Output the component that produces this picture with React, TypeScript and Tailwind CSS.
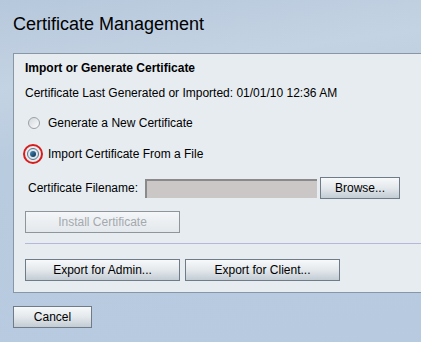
export default function App() {
  const btn =
    "h-[22px] border border-[#6f7b86] bg-gradient-to-b from-[#f7f9fa] via-[#e3e8ec] to-[#c3ccd4] text-[12px] text-black leading-none";

  return (
    <div
      className="relative h-[342px] w-[421px] overflow-hidden bg-[#b8cadf] text-black"
      style={{ fontFamily: '"Liberation Sans", Arial, sans-serif' }}
    >
      {/* lighter sweep in the top right */}
      <div className="pointer-events-none absolute inset-0 bg-[linear-gradient(172deg,#b6c8dc_0%,#c4d3e3_22%,#b9cbdf_40%,#b8cadf_100%)]" />

      <div className="relative pl-[13px]">
        <h1 className="pt-[13px] text-[18px] leading-[22px] font-normal">Certificate Management</h1>

        <div className="mt-[18px] h-[240px] border-y border-l border-[#8797a6] bg-[#e6ecf0] pl-[11px]">
          <div className="pt-[7px] text-[12px] leading-[14px] font-bold">Import or Generate Certificate</div>
          <div className="mt-[11px] text-[12px] leading-[14px]">
            Certificate Last Generated or Imported: 01/01/10 12:36 AM
          </div>

          <div className="mt-[16px] flex h-[14px] items-center text-[12px]">
            <span className="ml-[3px] mr-[8px] inline-block h-[12px] w-[12px] rounded-full border border-[#9aa0a6] bg-gradient-to-br from-[#d4d8dc] to-[#fbfcfd]" />
            Generate a New Certificate
          </div>

          <div className="mt-[17px] flex h-[14px] items-center text-[12px]">
            <span className="ml-[-2px] mr-[5px] flex h-[20px] w-[20px] items-center justify-center rounded-full border-2 border-[#d81c1c]">
              <span className="flex h-[12px] w-[12px] items-center justify-center rounded-full border border-[#5d7386] bg-[#dfe7ee]">
                <span className="h-[6px] w-[6px] rounded-full bg-gradient-to-br from-[#4a8fc0] to-[#0b3050]" />
              </span>
            </span>
            Import Certificate From a File
          </div>

          <div className="mt-[16px] flex items-center pl-[3px] text-[12px]">
            <span className="w-[117px]">Certificate Filename:</span>
            <span className="h-[19px] w-[172px] border-t-2 border-l-2 border-[#8a8a8a] bg-[#ccc7c7]" />
            <button className={`${btn} ml-[3px] h-[21px] w-[80px]`}>Browse...</button>
          </div>

          <button
            disabled
            className="mt-[12px] h-[22px] w-[155px] border border-[#8e969c] bg-gradient-to-b from-[#f4f6f8] to-[#e3e8ec] text-[12px] text-[#a4a9ad]"
          >
            Install Certificate
          </button>

          <div className="mt-[10px] h-px bg-[#b4b9dc]" />

          <div className="mt-[15px] flex gap-[5px]">
            <button className={`${btn} w-[155px]`}>Export for Admin...</button>
            <button className={`${btn} w-[155px]`}>Export for Client...</button>
          </div>
        </div>

        <button className={`${btn} mt-[13px] w-[79px]`}>Cancel</button>
      </div>
    </div>
  );
}
